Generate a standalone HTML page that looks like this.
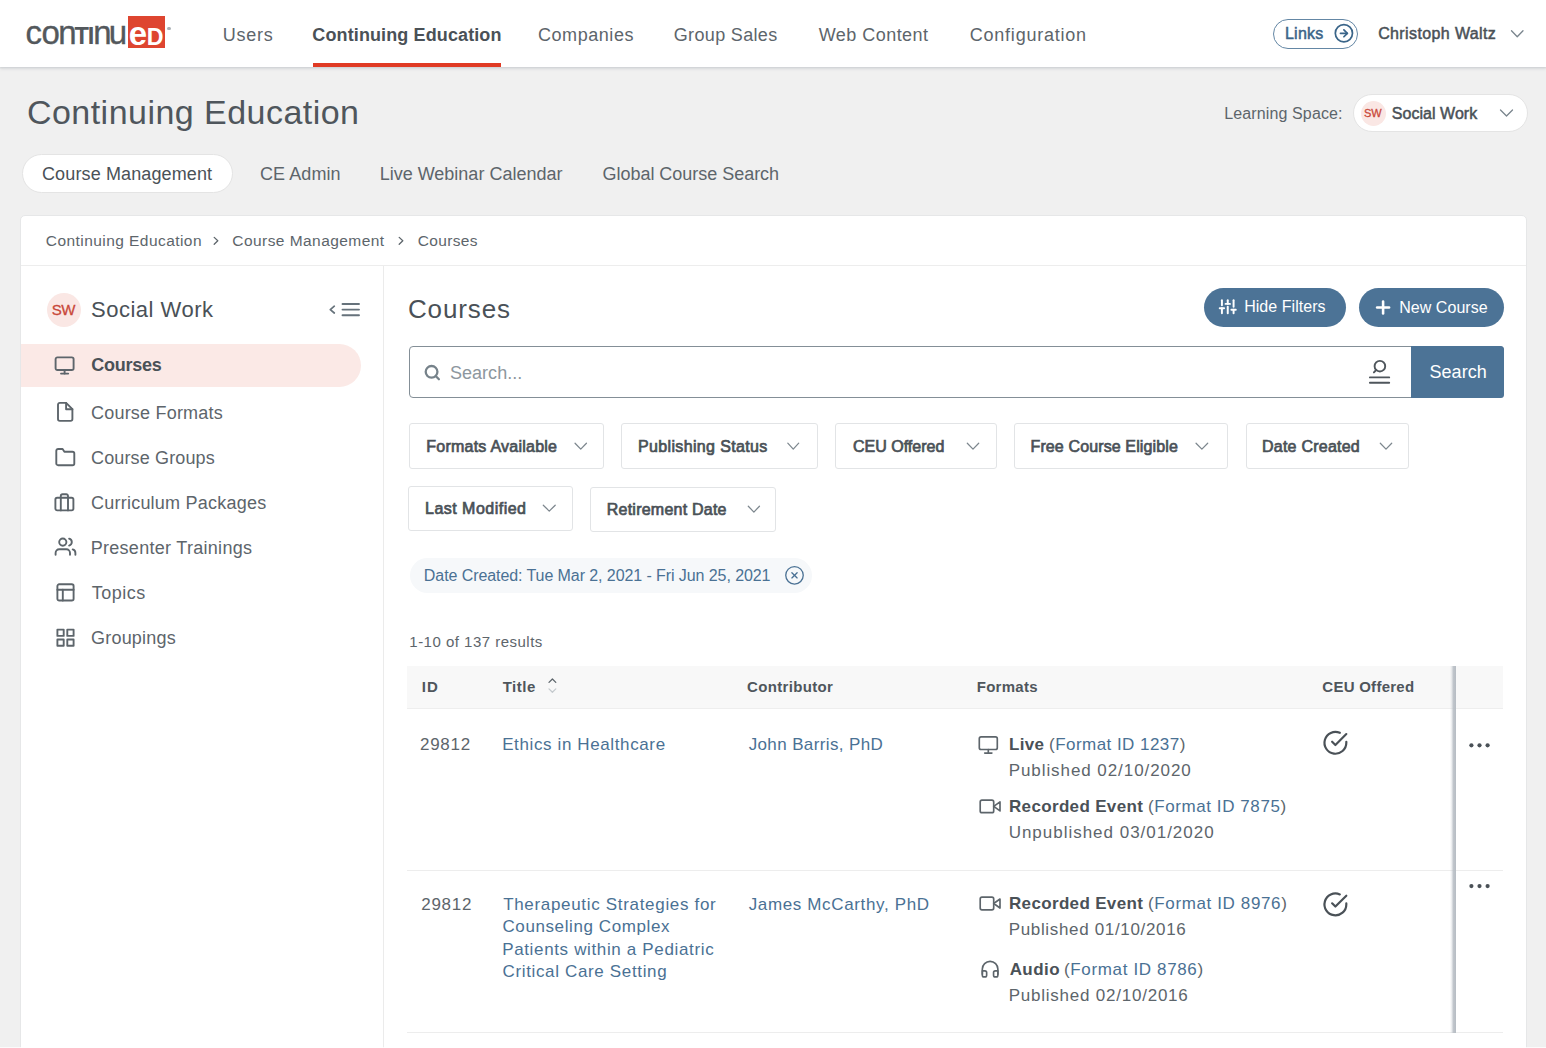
<!DOCTYPE html>
<html lang="en">
<head>
<meta charset="utf-8">
<title>Continuing Education - Courses</title>
<style>
html,body{margin:0;padding:0;}
body{width:1546px;height:1048px;overflow:hidden;background:#f0f0f0;font-family:"Liberation Sans",sans-serif;position:relative;}
.abs,.t{position:absolute;}
.t{white-space:nowrap;line-height:1;margin:0;padding:0;font-weight:normal;text-decoration:none;display:block;}
.box{position:absolute;box-sizing:border-box;}
.nav{left:0;top:0;width:1546px;height:66.6px;background:#fff;box-shadow:0 1px 1.5px #d0d3d6,0 1px 4px rgba(40,50,60,.16);}
.underline{left:312.7px;top:63.1px;width:188.3px;height:3.6px;background:#e03a24;}
.linkspill{left:1272.5px;top:19px;width:85.6px;height:29.5px;border:1.6px solid #6487a5;border-radius:15px;}
.selpill{left:1353px;top:93.5px;width:174.5px;height:38.5px;background:#fff;border:1px solid #e4e4e4;border-radius:20px;}
.tabpill{left:22px;top:153.5px;width:211px;height:39px;background:#fff;border:1px solid #e4e4e4;border-radius:20px;}
.card{left:20px;top:214.5px;width:1506.5px;height:860px;background:#fff;border:1px solid #e6e7e8;border-radius:5px;}
.hline{height:1px;background:#ededed;}
.vline{width:1px;background:#ebebeb;}
.circ{border-radius:50%;background:#fae7e4;}
.active{left:20.5px;top:344px;width:340.5px;height:43px;background:#fbe9e6;border-radius:0 21.5px 21.5px 0;}
.btn{background:#4c7396;border-radius:20px;}
.filter{border:1px solid #e2e4e6;border-radius:3px;background:#fff;}
.chip{left:409.6px;top:558.3px;width:402.8px;height:34.3px;background:#f6f8fa;border-radius:17.5px;}
.thead{left:407.25px;top:666px;width:1095.75px;height:42.5px;background:#f8f8f8;border-bottom:1px solid #eeeeee;}
.logo{position:absolute;white-space:nowrap;line-height:1;color:#53585c;}
svg.ov{position:absolute;left:0;top:0;width:1546px;height:1048px;pointer-events:none;}
</style>
</head>
<body>
<!-- top navigation -->
<div class="box nav"></div>
<div class="box underline"></div>
<div class="box linkspill"></div>

<!-- logo -->
<div class="box" style="left:127.5px;top:16px;width:37px;height:32.2px;background:#de4530;"></div>
<a aria-label="continued"><div class="logo" id="logo1" style="left:25.6px;top:16.3px;font-size:33px;-webkit-text-stroke:0.35px #53585c;"><span style="letter-spacing:-0.58px">c</span><span style="letter-spacing:-1.7px">o</span><span style="letter-spacing:-2.08px">n</span><span style="font-size:23.6px;font-weight:bold;letter-spacing:-1.2px;-webkit-text-stroke:0;">T</span><span style="font-size:23.6px;font-weight:bold;letter-spacing:-0.95px;-webkit-text-stroke:0;">I</span><span style="letter-spacing:-2.83px">n</span><span>u</span></div>
<div class="logo" id="logo2" style="left:128.7px;top:16.6px;font-size:33px;font-weight:bold;color:#fff;letter-spacing:-0.2px;">e<span style="font-size:23.2px;">D</span></div></a>
<div class="box" style="left:167.2px;top:26.8px;width:3.6px;height:3.6px;border-radius:50%;background:#aab1b6;"></div>

<!-- page header -->
<div class="box selpill"></div>
<div class="box circ" style="left:1360.5px;top:100.5px;width:25px;height:25px;"></div>
<div class="box tabpill"></div>

<!-- main card -->
<div class="box card"></div>
<div class="box hline" style="left:21px;top:265px;width:1505px;"></div>
<div class="box vline" style="left:382.5px;top:266px;height:790px;"></div>

<!-- sidebar -->
<div class="box circ" style="left:47.25px;top:292.5px;width:34px;height:34px;"></div>
<div class="box active"></div>

<!-- main content -->
<div class="box btn" style="left:1204.25px;top:287.75px;width:142px;height:39.25px;"></div>
<div class="box btn" style="left:1359.25px;top:287.75px;width:145px;height:39.25px;"></div>
<div class="box" style="left:409.25px;top:346px;width:1094.75px;height:51.5px;border:1.75px solid #848f97;border-radius:4px;background:#fff;"></div>
<div class="box" style="left:1411px;top:346px;width:93px;height:51.5px;background:#4c7396;border-radius:0 3.5px 3.5px 0;"></div>

<div class="box filter" style="left:409.25px;top:423.4px;width:194.75px;height:45.2px;"></div>
<div class="box filter" style="left:621.3px;top:423.4px;width:196.5px;height:45.2px;"></div>
<div class="box filter" style="left:835.25px;top:423.4px;width:161.25px;height:45.2px;"></div>
<div class="box filter" style="left:1013.75px;top:423.4px;width:213.75px;height:45.2px;"></div>
<div class="box filter" style="left:1245.5px;top:423.4px;width:163.75px;height:45.2px;"></div>
<div class="box filter" style="left:408.4px;top:485.9px;width:164.4px;height:44.8px;"></div>
<div class="box filter" style="left:590.2px;top:487.1px;width:185.7px;height:44.8px;"></div>

<div class="box chip"></div>

<div class="box thead"></div>
<div class="box hline" style="left:407.25px;top:870px;width:1095.75px;"></div>
<div class="box hline" style="left:407.25px;top:1032px;width:1095.75px;"></div>
<div class="box" style="left:1449.5px;top:666px;width:6.5px;height:366.5px;background:linear-gradient(to right,rgba(182,188,195,0) 0%,rgba(182,188,195,.3) 30%,rgba(182,188,195,.85) 55%,rgba(182,188,195,1) 100%);"></div>

<header><nav>
<a class="t" style="left:222.67px;top:26px;font-size:18px;letter-spacing:0.750px;color:#5d656b;">Users</a>
<a class="t" style="left:312.33px;top:26px;font-size:18px;letter-spacing:0.114px;color:#4a5157;font-weight:bold;">Continuing Education</a>
<a class="t" style="left:538.00px;top:26px;font-size:18px;letter-spacing:0.552px;color:#5d656b;">Companies</a>
<a class="t" style="left:673.75px;top:26px;font-size:18px;letter-spacing:0.342px;color:#5d656b;">Group Sales</a>
<a class="t" style="left:818.75px;top:26px;font-size:18px;letter-spacing:0.458px;color:#5d656b;">Web Content</a>
<a class="t" style="left:969.75px;top:26px;font-size:18px;letter-spacing:0.771px;color:#5d656b;">Configuration</a>
<a class="t" style="left:1285.00px;top:26px;font-size:16px;letter-spacing:0.225px;color:#3a6589;-webkit-text-stroke:0.5px #3a6589;">Links</a>
<a class="t" style="left:1378.13px;top:26px;font-size:16px;letter-spacing:0.386px;color:#4a5157;-webkit-text-stroke:0.5px #4a5157;">Christoph Waltz</a>
</nav></header>
<section>
<h1 class="t" style="left:26.93px;top:95px;font-size:34px;letter-spacing:0.467px;color:#4f565c;">Continuing Education</h1>
<span class="t" style="left:1224.17px;top:106px;font-size:16px;letter-spacing:0.131px;color:#5d656b;">Learning Space:</span>
<span class="t" style="left:1363.92px;top:108px;font-size:11px;letter-spacing:0.083px;color:#c9483a;-webkit-text-stroke:0.3px #c9483a;">SW</span>
<span class="t" style="left:1391.83px;top:106px;font-size:16px;letter-spacing:0.033px;color:#4a5157;-webkit-text-stroke:0.5px #4a5157;">Social Work</span>
<span class="t" style="left:42.00px;top:165px;font-size:18px;letter-spacing:0.125px;color:#4a5157;">Course Management</span>
<span class="t" style="left:260.00px;top:165px;font-size:18px;letter-spacing:0.071px;color:#5d656b;">CE Admin</span>
<span class="t" style="left:379.67px;top:165px;font-size:18px;letter-spacing:0.000px;color:#5d656b;">Live Webinar Calendar</span>
<span class="t" style="left:602.50px;top:165px;font-size:18px;letter-spacing:-0.026px;color:#5d656b;">Global Course Search</span>
</section>
<nav aria-label="Breadcrumb">
<a class="t" style="left:45.83px;top:233px;font-size:15.5px;letter-spacing:0.439px;color:#5d656b;">Continuing Education</a>
<a class="t" style="left:232.33px;top:233px;font-size:15.5px;letter-spacing:0.438px;color:#5d656b;">Course Management</a>
<a class="t" style="left:417.83px;top:233px;font-size:15.5px;letter-spacing:0.306px;color:#5d656b;">Courses</a>
</nav>
<aside>
<a class="t" style="left:51.83px;top:302px;font-size:15px;letter-spacing:-0.667px;color:#c9483a;-webkit-text-stroke:0.3px #c9483a;">SW</a>
<a class="t" style="left:91.00px;top:299px;font-size:22px;letter-spacing:0.500px;color:#4a5157;">Social Work</a>
<a class="t" style="left:91.33px;top:356px;font-size:18px;letter-spacing:-0.278px;color:#4a5157;font-weight:bold;">Courses</a>
<a class="t" style="left:91.00px;top:404px;font-size:18px;letter-spacing:0.205px;color:#5d656b;">Course Formats</a>
<a class="t" style="left:91.00px;top:449px;font-size:18px;letter-spacing:0.139px;color:#5d656b;">Course Groups</a>
<a class="t" style="left:91.00px;top:494px;font-size:18px;letter-spacing:0.231px;color:#5d656b;">Curriculum Packages</a>
<a class="t" style="left:90.67px;top:539px;font-size:18px;letter-spacing:0.292px;color:#5d656b;">Presenter Trainings</a>
<a class="t" style="left:91.67px;top:584px;font-size:18px;letter-spacing:0.500px;color:#5d656b;">Topics</a>
<a class="t" style="left:91.00px;top:629px;font-size:18px;letter-spacing:0.208px;color:#5d656b;">Groupings</a>
</aside>
<main>
<h2 class="t" style="left:407.92px;top:296px;font-size:26px;letter-spacing:0.889px;color:#4a5157;">Courses</h2>
<span class="t" style="left:1244.17px;top:299px;font-size:16px;letter-spacing:0.045px;color:#ffffff;">Hide Filters</span>
<span class="t" style="left:1399.17px;top:300px;font-size:16px;letter-spacing:0.056px;color:#ffffff;">New Course</span>
<span class="t" style="left:450.00px;top:364px;font-size:18px;letter-spacing:0.021px;color:#8d979e;">Search...</span>
<span class="t" style="left:1429.50px;top:363px;font-size:18px;letter-spacing:0.050px;color:#ffffff;">Search</span>
<span class="t" style="left:426.25px;top:439px;font-size:16px;letter-spacing:0.240px;color:#4a5157;-webkit-text-stroke:0.7px #4a5157;">Formats Available</span>
<span class="t" style="left:638.00px;top:439px;font-size:16px;letter-spacing:0.354px;color:#4a5157;-webkit-text-stroke:0.7px #4a5157;">Publishing Status</span>
<span class="t" style="left:852.92px;top:439px;font-size:16px;letter-spacing:0.017px;color:#4a5157;-webkit-text-stroke:0.7px #4a5157;">CEU Offered</span>
<span class="t" style="left:1030.50px;top:439px;font-size:16px;letter-spacing:0.123px;color:#4a5157;-webkit-text-stroke:0.7px #4a5157;">Free Course Eligible</span>
<span class="t" style="left:1262.00px;top:439px;font-size:16px;letter-spacing:0.235px;color:#4a5157;-webkit-text-stroke:0.7px #4a5157;">Date Created</span>
<span class="t" style="left:425.00px;top:501px;font-size:16px;letter-spacing:0.486px;color:#4a5157;-webkit-text-stroke:0.7px #4a5157;">Last Modified</span>
<span class="t" style="left:606.75px;top:502px;font-size:16px;letter-spacing:0.232px;color:#4a5157;-webkit-text-stroke:0.7px #4a5157;">Retirement Date</span>
<span class="t" style="left:423.87px;top:568px;font-size:16px;letter-spacing:-0.080px;color:#4a7194;">Date Created: Tue Mar 2, 2021 - Fri Jun 25, 2021</span>
<span class="t" style="left:409.30px;top:634px;font-size:15px;letter-spacing:0.488px;color:#5d656b;">1-10 of 137 results</span>
<span class="t" style="left:421.75px;top:679px;font-size:15px;letter-spacing:1.167px;color:#4f565c;font-weight:bold;">ID</span>
<span class="t" style="left:502.67px;top:679px;font-size:15px;letter-spacing:0.521px;color:#4f565c;font-weight:bold;">Title</span>
<span class="t" style="left:747.08px;top:679px;font-size:15px;letter-spacing:0.333px;color:#4f565c;font-weight:bold;">Contributor</span>
<span class="t" style="left:976.75px;top:679px;font-size:15px;letter-spacing:0.264px;color:#4f565c;font-weight:bold;">Formats</span>
<span class="t" style="left:1322.33px;top:679px;font-size:15px;letter-spacing:0.258px;color:#4f565c;font-weight:bold;">CEU Offered</span>
<span class="t" style="left:420.00px;top:736px;font-size:17px;letter-spacing:0.729px;color:#5d656b;">29812</span>
<span class="t" style="left:502.17px;top:736px;font-size:17px;letter-spacing:0.618px;color:#4a7194;">Ethics in Healthcare</span>
<span class="t" style="left:748.67px;top:736px;font-size:17px;letter-spacing:0.378px;color:#4a7194;">John Barris, PhD</span>
<span class="t" style="left:1009.00px;top:736px;font-size:17px;letter-spacing:0.306px;color:#4a5157;font-weight:bold;">Live</span>
<span class="t" style="left:1049.00px;top:736px;font-size:17px;letter-spacing:0.461px;color:#5d656b;">(<span style="color:#4a7194">Format ID 1237</span>)</span>
<span class="t" style="left:1008.67px;top:762px;font-size:17px;letter-spacing:0.930px;color:#5d656b;">Published 02/10/2020</span>
<span class="t" style="left:1009.00px;top:798px;font-size:17px;letter-spacing:0.340px;color:#4a5157;font-weight:bold;">Recorded Event</span>
<span class="t" style="left:1148.00px;top:798px;font-size:17px;letter-spacing:0.578px;color:#5d656b;">(<span style="color:#4a7194">Format ID 7875</span>)</span>
<span class="t" style="left:1008.67px;top:824px;font-size:17px;letter-spacing:0.984px;color:#5d656b;">Unpublished 03/01/2020</span>
<span class="t" style="left:421.25px;top:896px;font-size:17px;letter-spacing:0.729px;color:#5d656b;">29812</span>
<span class="t" style="left:503.17px;top:896px;font-size:17px;letter-spacing:0.680px;color:#4a7194;">Therapeutic Strategies for</span>
<span class="t" style="left:502.50px;top:918px;font-size:17px;letter-spacing:0.593px;color:#4a7194;">Counseling Complex</span>
<span class="t" style="left:502.17px;top:941px;font-size:17px;letter-spacing:0.647px;color:#4a7194;">Patients within a Pediatric</span>
<span class="t" style="left:502.50px;top:963px;font-size:17px;letter-spacing:0.650px;color:#4a7194;">Critical Care Setting</span>
<span class="t" style="left:748.67px;top:896px;font-size:17px;letter-spacing:0.644px;color:#4a7194;">James McCarthy, PhD</span>
<span class="t" style="left:1009.00px;top:895px;font-size:17px;letter-spacing:0.340px;color:#4a5157;font-weight:bold;">Recorded Event</span>
<span class="t" style="left:1148.00px;top:895px;font-size:17px;letter-spacing:0.628px;color:#5d656b;">(<span style="color:#4a7194">Format ID 8976</span>)</span>
<span class="t" style="left:1008.67px;top:921px;font-size:17px;letter-spacing:0.667px;color:#5d656b;">Published 01/10/2016</span>
<span class="t" style="left:1009.67px;top:961px;font-size:17px;letter-spacing:0.438px;color:#4a5157;font-weight:bold;">Audio</span>
<span class="t" style="left:1064.00px;top:961px;font-size:17px;letter-spacing:0.644px;color:#5d656b;">(<span style="color:#4a7194">Format ID 8786</span>)</span>
<span class="t" style="left:1008.67px;top:987px;font-size:17px;letter-spacing:0.772px;color:#5d656b;">Published 02/10/2016</span>
</main>

<svg class="ov" viewBox="0 0 1546 1048">
<g transform="translate(53.80 354.70) scale(0.9000)" fill="none" stroke="#5d656b" stroke-width="2.1" stroke-linecap="round" stroke-linejoin="round" ><rect x="2" y="3" width="20" height="14" rx="2" ry="2"/><line x1="8" y1="21" x2="16" y2="21"/><line x1="12" y1="17" x2="12" y2="21"/></g>
<g transform="translate(54.40 401.10) scale(0.9000)" fill="none" stroke="#5d656b" stroke-width="2.1" stroke-linecap="round" stroke-linejoin="round" ><path d="M13 2H6a2 2 0 0 0-2 2v16a2 2 0 0 0 2 2h12a2 2 0 0 0 2-2V9z"/><polyline points="13 2 13 9 20 9"/></g>
<g transform="translate(54.50 446.30) scale(0.9000)" fill="none" stroke="#5d656b" stroke-width="2.1" stroke-linecap="round" stroke-linejoin="round" ><path d="M22 19a2 2 0 0 1-2 2H4a2 2 0 0 1-2-2V5a2 2 0 0 1 2-2h5l2 3h9a2 2 0 0 1 2 2z"/></g>
<g transform="translate(53.60 491.50) scale(0.9000)" fill="none" stroke="#5d656b" stroke-width="2.1" stroke-linecap="round" stroke-linejoin="round" ><rect x="2" y="7" width="20" height="14" rx="2" ry="2"/><path d="M16 21V5a2 2 0 0 0-2-2h-4a2 2 0 0 0-2 2v16"/></g>
<g transform="translate(54.70 535.80) scale(0.9000)" fill="none" stroke="#5d656b" stroke-width="2.1" stroke-linecap="round" stroke-linejoin="round" ><path d="M17 21v-2a4 4 0 0 0-4-4H5a4 4 0 0 0-4 4v2"/><circle cx="9" cy="7" r="4"/><path d="M23 21v-2a4 4 0 0 0-3-3.87"/><path d="M16 3.13a4 4 0 0 1 0 7.75"/></g>
<g transform="translate(54.70 581.60) scale(0.9000)" fill="none" stroke="#5d656b" stroke-width="2.1" stroke-linecap="round" stroke-linejoin="round" ><rect x="3" y="3" width="18" height="18" rx="2" ry="2"/><line x1="3" y1="9" x2="21" y2="9"/><line x1="9" y1="21" x2="9" y2="9"/></g>
<g transform="translate(54.70 626.90) scale(0.9000)" fill="none" stroke="#5d656b" stroke-width="2.1" stroke-linecap="round" stroke-linejoin="round" ><rect x="3" y="3" width="7" height="7"/><rect x="14" y="3" width="7" height="7"/><rect x="14" y="14" width="7" height="7"/><rect x="3" y="14" width="7" height="7"/></g>
<polyline points="334.3,306.2 330.3,309.6 334.3,313" fill="none" stroke="#66727b" stroke-width="1.7" stroke-linecap="round" stroke-linejoin="round"/>
<line x1="342.5" y1="304" x2="359" y2="304" stroke="#66727b" stroke-width="1.9" stroke-linecap="round"/>
<line x1="342.5" y1="309.6" x2="359" y2="309.6" stroke="#66727b" stroke-width="1.9" stroke-linecap="round"/>
<line x1="342.5" y1="315.2" x2="359" y2="315.2" stroke="#66727b" stroke-width="1.9" stroke-linecap="round"/>
<polyline points="214.2,237.4 217.79999999999998,240.8 214.2,244.2" fill="none" stroke="#5d656b" stroke-width="1.3" stroke-linecap="round" stroke-linejoin="round"/>
<polyline points="399.2,237.4 402.8,240.8 399.2,244.2" fill="none" stroke="#5d656b" stroke-width="1.3" stroke-linecap="round" stroke-linejoin="round"/>
<g transform="translate(1333.60 23.00) scale(0.8583)" fill="none" stroke="#3a6589" stroke-width="2.0" stroke-linecap="round" stroke-linejoin="round" ><circle cx="12" cy="12" r="10"/><polyline points="12 16 16 12 12 8"/><line x1="8" y1="12" x2="16" y2="12"/></g>
<polyline points="1511.50,30.80 1517.25,36.80 1523.00,30.80" fill="none" stroke="#7a858d" stroke-width="1.3" stroke-linecap="round" stroke-linejoin="round"/>
<polyline points="1500.50,110.00 1506.50,116.00 1512.50,110.00" fill="none" stroke="#7a858d" stroke-width="1.3" stroke-linecap="round" stroke-linejoin="round"/>
<g transform="translate(1219.00 298.05) scale(0.7292)" fill="none" stroke="#ffffff" stroke-width="2.7" stroke-linecap="round" stroke-linejoin="round" ><line x1="4" y1="21" x2="4" y2="14"/><line x1="4" y1="10" x2="4" y2="3"/><line x1="12" y1="21" x2="12" y2="12"/><line x1="12" y1="8" x2="12" y2="3"/><line x1="20" y1="21" x2="20" y2="16"/><line x1="20" y1="12" x2="20" y2="3"/><line x1="1" y1="14" x2="7" y2="14"/><line x1="9" y1="8" x2="15" y2="8"/><line x1="17" y1="16" x2="23" y2="16"/></g>
<g transform="translate(1372.85 297.25) scale(0.8542)" fill="none" stroke="#ffffff" stroke-width="3.0" stroke-linecap="round" stroke-linejoin="round" ><line x1="12" y1="5" x2="12" y2="19"/><line x1="5" y1="12" x2="19" y2="12"/></g>
<g transform="translate(423.50 363.80) scale(0.7333)" fill="none" stroke="#76828a" stroke-width="3.1" stroke-linecap="round" stroke-linejoin="round" ><circle cx="11" cy="11" r="8"/><line x1="21" y1="21" x2="16.65" y2="16.65"/></g>
<g fill="none" stroke="#4f565c" stroke-width="1.9" stroke-linecap="round"><circle cx="1379.9" cy="366.2" r="5.3"/><line x1="1376.2" y1="370" x2="1373.9" y2="372.4"/><line x1="1369.9" y1="377.4" x2="1389.2" y2="377.4"/><line x1="1369.9" y1="382.8" x2="1389.2" y2="382.8"/></g>
<polyline points="575.05,443.20 580.75,449.10 586.45,443.20" fill="none" stroke="#7d878e" stroke-width="1.25" stroke-linecap="round" stroke-linejoin="round"/>
<polyline points="787.80,443.20 793.25,449.10 798.70,443.20" fill="none" stroke="#7d878e" stroke-width="1.25" stroke-linecap="round" stroke-linejoin="round"/>
<polyline points="967.30,443.20 973.00,449.10 978.70,443.20" fill="none" stroke="#7d878e" stroke-width="1.25" stroke-linecap="round" stroke-linejoin="round"/>
<polyline points="1196.05,443.20 1201.88,449.10 1207.70,443.20" fill="none" stroke="#7d878e" stroke-width="1.25" stroke-linecap="round" stroke-linejoin="round"/>
<polyline points="1380.30,443.20 1386.00,449.10 1391.70,443.20" fill="none" stroke="#7d878e" stroke-width="1.25" stroke-linecap="round" stroke-linejoin="round"/>
<polyline points="543.30,505.20 549.25,511.10 555.20,505.20" fill="none" stroke="#7d878e" stroke-width="1.25" stroke-linecap="round" stroke-linejoin="round"/>
<polyline points="748.30,506.20 753.88,512.10 759.45,506.20" fill="none" stroke="#7d878e" stroke-width="1.25" stroke-linecap="round" stroke-linejoin="round"/>
<g transform="translate(784.00 564.80) scale(0.8750)" fill="none" stroke="#4a7194" stroke-width="1.5" stroke-linecap="round" stroke-linejoin="round" ><circle cx="12" cy="12" r="10"/><line x1="15" y1="9" x2="9" y2="15"/><line x1="9" y1="9" x2="15" y2="15"/></g>
<polyline points="549.00,682.40 552.40,679.00 555.80,682.40" fill="none" stroke="#5d656b" stroke-width="1.25" stroke-linecap="round" stroke-linejoin="round"/>
<polyline points="549.00,688.90 552.40,692.30 555.80,688.90" fill="none" stroke="#c5cace" stroke-width="1.25" stroke-linecap="round" stroke-linejoin="round"/>
<g transform="translate(977.50 734.20) scale(0.9000)" fill="none" stroke="#5d656b" stroke-width="1.85" stroke-linecap="round" stroke-linejoin="round" ><rect x="2" y="3" width="20" height="14" rx="2" ry="2"/><line x1="8" y1="21" x2="16" y2="21"/><line x1="12" y1="17" x2="12" y2="21"/></g>
<g transform="translate(979.30 795.60) scale(0.9000)" fill="none" stroke="#5d656b" stroke-width="1.85" stroke-linecap="round" stroke-linejoin="round" ><polygon points="23 7 16 12 23 17 23 7"/><rect x="1" y="5" width="15" height="14" rx="2" ry="2"/></g>
<g transform="translate(979.30 892.70) scale(0.9000)" fill="none" stroke="#5d656b" stroke-width="1.85" stroke-linecap="round" stroke-linejoin="round" ><polygon points="23 7 16 12 23 17 23 7"/><rect x="1" y="5" width="15" height="14" rx="2" ry="2"/></g>
<g transform="translate(979.73 958.73) scale(0.8640)" fill="none" stroke="#5d656b" stroke-width="1.9" stroke-linecap="round" stroke-linejoin="round" ><path d="M3 18v-6a9 9 0 0 1 18 0v6"/><path d="M21 19a2 2 0 0 1-2 2h-1a2 2 0 0 1-2-2v-3a2 2 0 0 1 2-2h3zM3 19a2 2 0 0 0 2 2h1a2 2 0 0 0 2-2v-3a2 2 0 0 0-2-2H3z"/></g>
<g transform="translate(1322.30 729.70) scale(1.0917)" fill="none" stroke="#4a5157" stroke-width="2.0" stroke-linecap="round" stroke-linejoin="round" ><path d="M22 11.08V12a10 10 0 1 1-5.93-9.14"/><polyline points="22 4 12 14.01 9 11.01"/></g>
<g transform="translate(1322.30 891.30) scale(1.0917)" fill="none" stroke="#4a5157" stroke-width="2.0" stroke-linecap="round" stroke-linejoin="round" ><path d="M22 11.08V12a10 10 0 1 1-5.93-9.14"/><polyline points="22 4 12 14.01 9 11.01"/></g>
<circle cx="1471.4" cy="745.3" r="2.1" fill="#4a5157"/>
<circle cx="1479.5" cy="745.3" r="2.1" fill="#4a5157"/>
<circle cx="1487.6" cy="745.3" r="2.1" fill="#4a5157"/>
<circle cx="1471.4" cy="886.1" r="2.1" fill="#4a5157"/>
<circle cx="1479.5" cy="886.1" r="2.1" fill="#4a5157"/>
<circle cx="1487.6" cy="886.1" r="2.1" fill="#4a5157"/>
</svg>
<div class="box" style="left:0;top:1047px;width:1546px;height:1px;background:rgba(255,255,255,.75);"></div>
</body>
</html>
